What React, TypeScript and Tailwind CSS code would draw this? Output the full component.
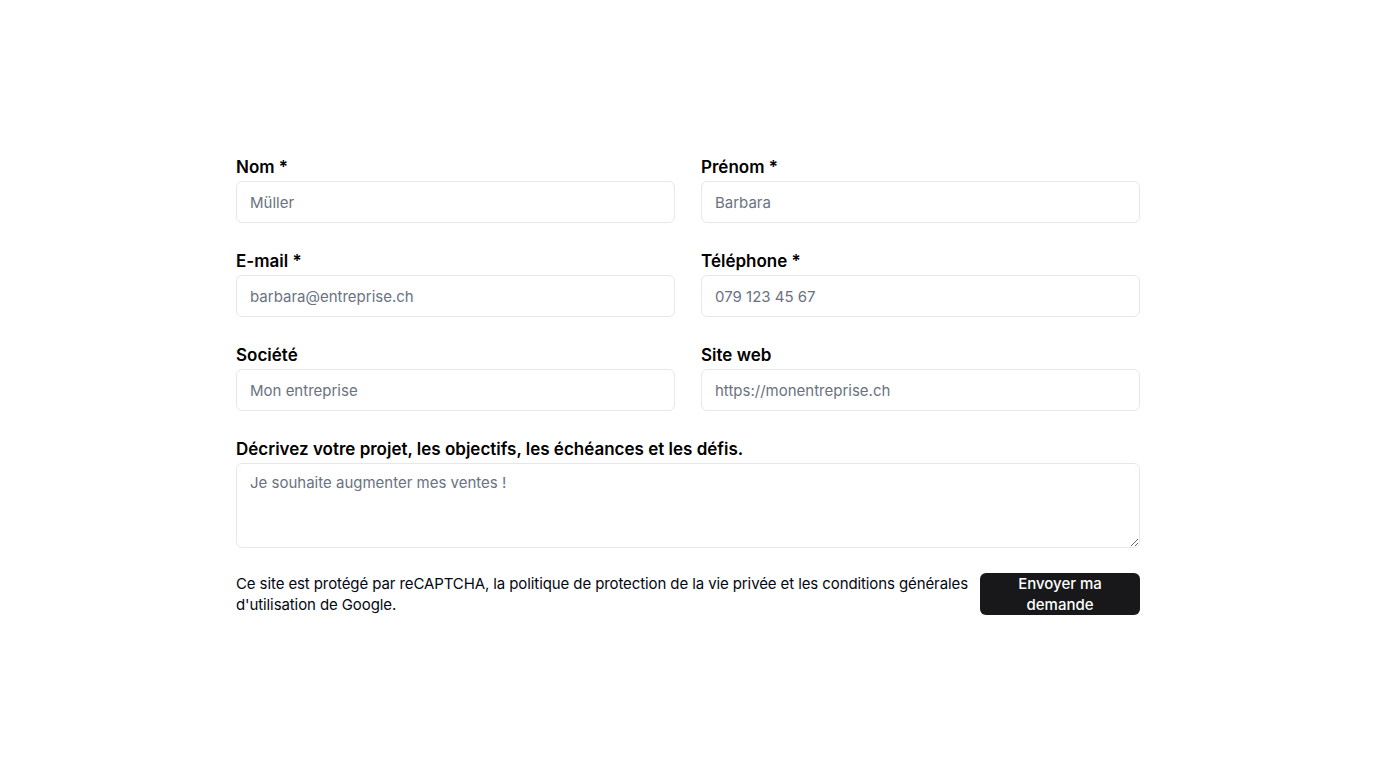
import { ReactNode } from "react";

function Field({ label, children }: { label: string; children: ReactNode }) {
    return (
        <label className="flex flex-col">
            <span className="text-[17px] leading-7 font-semibold text-black">{label}</span>
            {children}
        </label>
    );
}

const inputClass =
    "h-[42px] w-full rounded-md border border-gray-200 bg-white px-[13px] text-[15px] text-gray-900 placeholder:text-gray-500 outline-none";

export default function App() {
    return (
        <div
            className="min-h-screen bg-white flex items-center justify-center"
            style={{ fontFamily: "Inter, 'Noto Sans', sans-serif" }}
        >
            <form className="w-[904px] flex flex-col" onSubmit={(e) => e.preventDefault()}>
                <div className="grid grid-cols-2 gap-x-[26px] gap-y-6">
                    <Field label="Nom *">
                        <input className={inputClass} placeholder="Müller" />
                    </Field>
                    <Field label="Prénom *">
                        <input className={inputClass} placeholder="Barbara" />
                    </Field>
                    <Field label="E-mail *">
                        <input className={inputClass} placeholder="barbara@entreprise.ch" />
                    </Field>
                    <Field label="Téléphone *">
                        <input className={inputClass} placeholder="079 123 45 67" />
                    </Field>
                    <Field label="Société">
                        <input className={inputClass} placeholder="Mon entreprise" />
                    </Field>
                    <Field label="Site web">
                        <input className={inputClass} placeholder="https://monentreprise.ch" />
                    </Field>
                    <div className="col-span-2">
                        <Field label="Décrivez votre projet, les objectifs, les échéances et les défis.">
                            <textarea
                                className="h-[85px] w-full rounded-md border border-gray-200 bg-white px-[13px] py-2 text-[15px] text-gray-900 placeholder:text-gray-500 outline-none"
                                placeholder="Je souhaite augmenter mes ventes !"
                            />
                        </Field>
                    </div>
                </div>

                <div className="mt-[25px] flex items-center gap-0.5">
                    <p className="flex-1 text-[15px] leading-[21px] tracking-[-0.1px] text-gray-950">
                        Ce site est protégé par reCAPTCHA, la politique de protection de la vie privée et les conditions générales d'utilisation de Google.
                    </p>
                    <button
                        type="submit"
                        className="w-40 h-[42px] shrink-0 rounded-md bg-zinc-900 px-4 text-[15px] leading-[21px] font-medium text-white"
                    >
                        Envoyer ma demande
                    </button>
                </div>
            </form>
        </div>
    );
}
